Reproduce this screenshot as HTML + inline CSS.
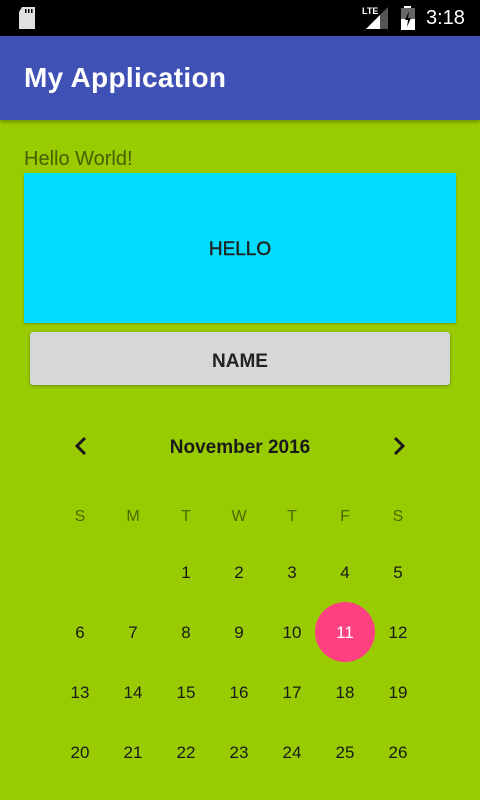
<!DOCTYPE html>
<html><head><style>
body{margin:0;width:480px;height:800px;overflow:hidden;background:#99cc00;font-family:"Liberation Sans",sans-serif;position:relative}
.a{position:absolute}
.c{position:absolute;width:40px;margin-left:-20px;text-align:center;font-size:17px;color:#1a1a1a}
</style></head><body>
<div class="a" style="left:0;top:0;width:480px;height:36px;background:#000"></div>
<svg class="a" style="left:17px;top:7px" width="20" height="22"><path d="M5 0H18V22H2V5Z" fill="#e0e0e0"/><rect x="8" y="2" width="1.5" height="4" fill="#000"/><rect x="11" y="2" width="1.5" height="4" fill="#000"/><rect x="14" y="2" width="1.5" height="4" fill="#000"/></svg>
<div class="a" style="left:362px;top:6px;font-size:9px;color:#fff;font-weight:bold">LTE</div>
<svg class="a" style="left:366px;top:7px" width="22" height="22"><path d="M22 0V22H0Z" fill="#555"/><path d="M14 8V22H0Z" fill="#fff"/></svg>
<svg class="a" style="left:400px;top:6px" width="16" height="24"><rect x="4" y="0" width="7" height="3" fill="#fff"/><rect x="1" y="2" width="14" height="22" fill="#fff"/><rect x="1" y="2" width="14" height="11" fill="#666"/><path d="M9 5L5 14H8L7 21L11 12H8Z" fill="#000"/></svg>
<div class="a" style="left:426px;top:7px;font-size:20px;color:#fff">3:18</div>
<div class="a" style="left:0;top:36px;width:480px;height:84px;background:#3f51b5;box-shadow:0 2px 4px rgba(0,0,0,.3)"></div>
<div class="a" style="left:24px;top:62px;font-size:28px;font-weight:bold;letter-spacing:0.3px;color:#fff">My Application</div>
<div class="a" style="left:24px;top:148px;font-size:20px;color:#476000">Hello World!</div>
<div class="a" style="left:24px;top:173px;width:432px;height:150px;background:#00ddff;box-shadow:0 1px 2px rgba(0,0,0,.25)"></div>
<div class="a" style="left:24px;top:239px;width:432px;text-align:center;font-size:19px;color:#222;-webkit-text-stroke:0.4px #222">HELLO</div>
<div class="a" style="left:30px;top:332px;width:420px;height:53px;background:#d6d7d7;border-radius:3px;box-shadow:0 1px 3px rgba(0,0,0,.35)"></div>
<div class="a" style="left:30px;top:351px;width:420px;text-align:center;font-size:19px;color:#222;font-weight:bold">NAME</div>
<svg class="a" style="left:74px;top:436px" width="14" height="20"><path d="M11 2L3 10L11 18" stroke="#1a1a1a" stroke-width="3" fill="none"/></svg>
<svg class="a" style="left:392px;top:436px" width="14" height="20"><path d="M3 2L11 10L3 18" stroke="#1a1a1a" stroke-width="3" fill="none"/></svg>
<div class="a" style="left:0;top:437px;width:480px;text-align:center;font-size:19px;font-weight:bold;color:#1a1a1a">November 2016</div>
<div class="a" style="left:315px;top:602px;width:60px;height:60px;border-radius:50%;background:#ff4081"></div>
<div id="g"></div>
<script>
var x=[80,133,186,239,292,345,398],h='',w='SMTWTFS';
for(var i=0;i<7;i++)h+='<div class="c" style="left:'+x[i]+'px;top:508px;color:#4a6a00;font-size:16px">'+w[i]+'</div>';
var ys=[572,632,692,752],d=1;
for(var r=0;r<4;r++)for(var i=(r?0:2);i<7;i++){h+='<div class="c" style="left:'+x[i]+'px;top:'+(ys[r]-9)+'px;'+(d==11?'color:#fff':'')+'">'+d+'</div>';d++;}
document.getElementById('g').innerHTML=h;
</script>
</body></html>
